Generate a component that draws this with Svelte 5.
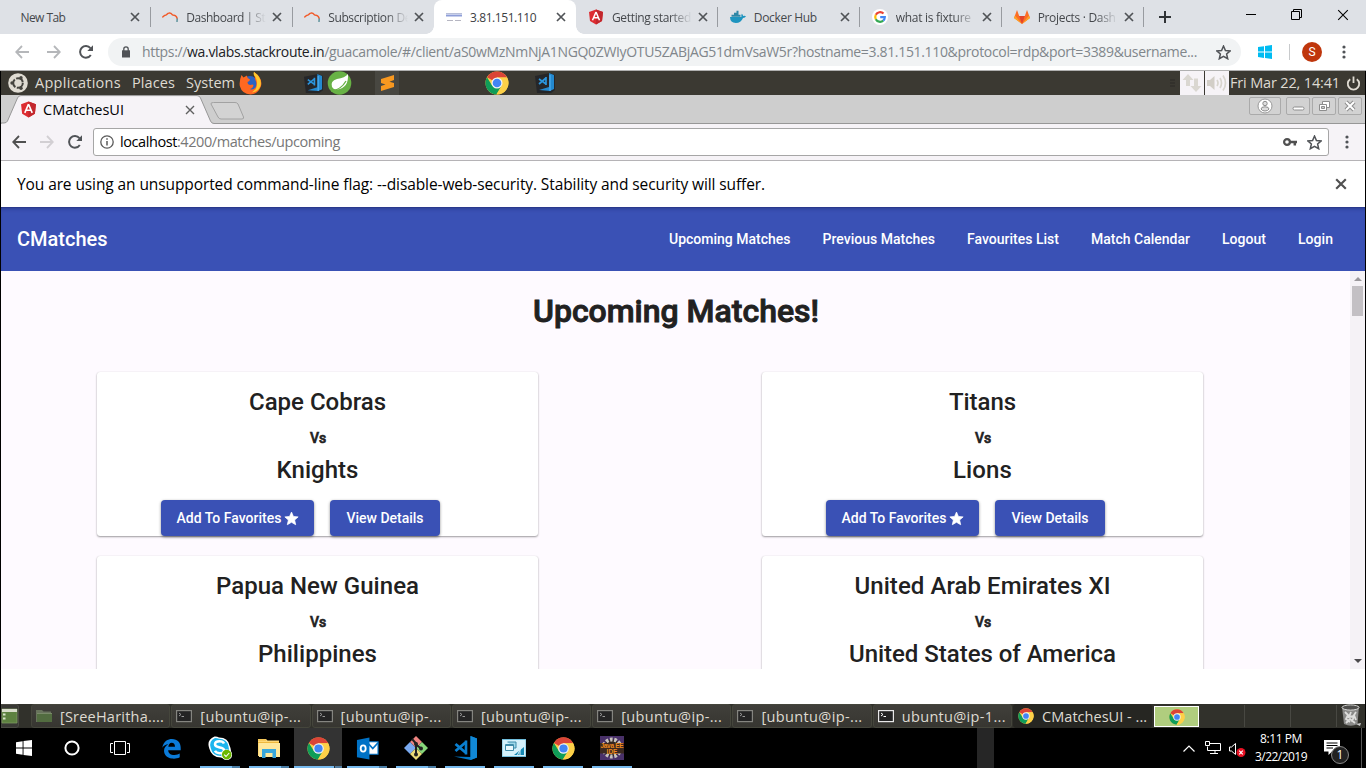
<script>
  const tabs = [
    { title: 'New Tab', w: 45 },
    { title: 'Dashboard | St', icon: 'stack', w: 79, fade: true },
    { title: 'Subscription De', icon: 'stack', w: 83, fade: true },
    { title: '3.81.151.110', icon: 'page', w: 66, active: true },
    { title: 'Getting started', icon: 'angular', w: 79, fade: true },
    { title: 'Docker Hub', icon: 'docker', w: 63 },
    { title: 'what is fixture', icon: 'google', w: 75, fade: true },
    { title: 'Projects · Dash', icon: 'gitlab', w: 78, fade: true }
  ];
  const links = [
    ['Upcoming Matches', 121.5],
    ['Previous Matches', 112.5],
    ['Favourites List', 92],
    ['Match Calendar', 99],
    ['Logout', 44],
    ['Login', 35]
  ];
  const matches = [
    { a: 'Cape Cobras', aw: 137, b: 'Knights', bw: 82, actions: true },
    { a: 'Titans', aw: 67, b: 'Lions', bw: 59, actions: true },
    { a: 'Papua New Guinea', aw: 203, b: 'Philippines', bw: 119 },
    { a: 'United Arab Emirates XI', aw: 256, b: 'United States of America', bw: 267 }
  ];
  const windows = [
    { title: '[SreeHaritha....', icon: 'folder', w: 104 },
    { title: '[ubuntu@ip-...', icon: 'term', w: 101 },
    { title: '[ubuntu@ip-...', icon: 'term', w: 101 },
    { title: '[ubuntu@ip-...', icon: 'term', w: 101 },
    { title: '[ubuntu@ip-...', icon: 'term', w: 101 },
    { title: '[ubuntu@ip-...', icon: 'term', w: 101 },
    { title: 'ubuntu@ip-1...', icon: 'termOpen', w: 104 },
    { title: 'CMatchesUI - ...', icon: 'chrome', w: 105, active: true }
  ];
  const apps = [
    { icon: 'edge', size: 21 },
    { icon: 'skype', run: 'stack' },
    { icon: 'explorer', run: 'stack' },
    { icon: 'chrome', run: 'focus', size: 23 },
    { icon: 'outlook', run: 'stack', size: 23 },
    { icon: 'git', run: 'stack' },
    { icon: 'vscode', run: 'one' },
    { icon: 'remote', run: 'one' },
    { icon: 'chrome', run: 'one', size: 23 },
    { icon: 'eclipse', run: 'one' }
  ];

  // Tracks a label so that it fills the given width in pixels.
  function fit(node, width) {
    const natural = node.getBoundingClientRect().width;
    const count = [...node.textContent].length;
    node.style.letterSpacing = `${(width - natural) / count}px`;
  }
</script>

{#snippet label(text, width)}<span class="label" use:fit={width}>{text}</span>{/snippet}

{#snippet cross(size, sw, color)}
  <svg width={size} height={size} viewBox="0 0 10 10"><path d="M1 1L9 9M9 1L1 9" stroke={color} stroke-width={sw} fill="none" /></svg>
{/snippet}

{#snippet icon(name, s)}
  {#if name === 'chrome'}
    <svg width={s} height={s} viewBox="0 0 24 24">
      <circle cx="12" cy="12" r="11.5" fill="#fdd048" />
      <path d="M12 12L2 6.2A11.5 11.5 0 0 1 22 6.2L21.9 6.5H12Z" fill="#db4437" />
      <path d="M2 6.2A11.5 11.5 0 0 0 11.3 23.5L16.8 14.6L12 12L7.2 14.7Z" fill="#0f9d58" />
      <path d="M22 6.5H12L16.8 14.7L11.5 23.5A11.5 11.5 0 0 0 22 6.5Z" fill="#fdd048" />
      <circle cx="12" cy="12" r="5.5" fill="#f4f4f4" /><circle cx="12" cy="12" r="4.3" fill="#4285f4" />
    </svg>
  {:else if name === 'angular'}
    <svg width={s} height={s} viewBox="0 0 16 16">
      <path d="M8 .5L15 3L14 12L8 15.5L2 12L1 3Z" fill="#dd2c31" /><path d="M8 .5L15 3L14 12L8 15.5Z" fill="#c2272d" />
      <path d="M8 3L4.5 11.2M8 3L11.5 11.2M5.8 8.7H10.2" stroke="#fff" stroke-width="1.5" fill="none" />
    </svg>
  {:else if name === 'stack'}
    <svg width={s} height={s} viewBox="0 0 16 16" fill="none">
      <path d="M.3 8.200C1.500 7.800 2 6 4 5.900C5.200 5.800 5.300 4.300 6.800 4C9 3.500 9.800 5 10.500 5.900C12 6.500 13 6 14 7.200C15 8.300 14.800 9 15.500 9.800" stroke="#f15a29" stroke-width="1.500" /><path d="M15.200 9.500L15 13" stroke="#4b8791" stroke-width="1.300" />
    </svg>
  {:else if name === 'page'}
    <svg width={s} height={s} viewBox="0 0 16 16"><path d="M0 4.5H16" stroke="#b8bfd8" stroke-width="1" /><path d="M0 6.5H16" stroke="#8e9ed8" stroke-width="2" /><path d="M1 11.5H7M9 11.5H15" stroke="#b6b6c2" stroke-width="1" /></svg>
  {:else if name === 'docker'}
    <svg width={s} height={s} viewBox="0 0 16 16"><path d="M0 8H11.4Q11 6 11.8 4.8Q13 5.6 13.1 7Q14.8 6.4 16 7.2Q15.2 9 13 9Q11 14 5.8 14Q.2 13.8 0 8Z" fill="#1e94bf" /><path d="M1.500 6.800H10.500M4 4.800H8.500M6.500 2.800H8.500" stroke="#2e86a6" stroke-width="2" /></svg>
  {:else if name === 'google'}
    <svg width={s} height={s} viewBox="0 0 16 16" fill="none" stroke-width="2.2">
      <circle cx="8" cy="8" r="8" fill="#fff" />
      <path d="M11.5 4.6A4.8 4.8 0 0 0 3.8 5.8" stroke="#ea4335" /><path d="M3.8 5.8A4.8 4.8 0 0 0 3.8 10.2" stroke="#fbbc05" />
      <path d="M3.8 10.2A4.8 4.8 0 0 0 11.2 11.6" stroke="#34a853" /><path d="M8.2 8.2H12.8A4.8 4.8 0 0 1 11.2 11.6" stroke="#4285f4" />
    </svg>
  {:else if name === 'gitlab'}
    <svg width={s} height={s} viewBox="0 0 16 16"><path d="M3 1L5.2 7H10.8L13 1L16 9L8 15L0 9Z" fill="#fc6d26" /><path d="M5.2 7H10.8L8 15Z" fill="#e24329" /><path d="M0 9L1 6.5L8 15ZM16 9L15 6.5L8 15Z" fill="#fca326" /></svg>
  {:else if name === 'vscode'}
    <svg width={s} height={s} viewBox="0 0 24 24"><path d="M17.500 0L24 2.500V21.500L17.500 24L1 20.500L17.500 21Z" fill="#0078c8" /><path d="M17.500 0L24 2.500V21.500L17.500 24Z" fill="#1188d6" /><path d="M12.500 6.500L2.500 15M12.500 16.500L2.500 8" stroke="#0a7fd0" stroke-width="2.800" /><path d="M13 4.500V18.500" stroke="#0a7fd0" stroke-width="2.600" /></svg>
  {:else if name === 'codeDark'}
    <svg width={s} height={s} viewBox="0 0 20 20"><path d="M0 3L15 0L20 2V17L16 20L2 20Z" fill="#252629" /><path d="M14 0L19 2V16L15 18L4 17L14 14Z" fill="#2489cf" /><path d="M15 2V18" stroke="#45a6e8" stroke-width="1.5" /><path d="M11 5L4 11M11 11L4 6M11 4V12" stroke="#2b95dd" stroke-width="1.7" /></svg>
  {:else if name === 'folder'}
    <svg width={s} height={s} viewBox="0 0 16 16"><path d="M0 2H6L7.5 3.5H15V14H0Z" fill="#68735c" /><path d="M1 5H16V14H1Z" fill="#526c40" /><path d="M1 5.5H16" stroke="#798a69" /></svg>
  {:else if name === 'term' || name === 'termOpen'}
    <svg width={s} height={s} viewBox="0 0 16 16"><rect x=".6" y="2.6" width="14.8" height="11" fill="#242424" stroke={name === 'term' ? '#858580' : '#e8e8e8'} stroke-width="1.2" /><path d="M3 5L5 6.5L3 8M5.5 8.5H8" stroke={name === 'term' ? '#999' : '#fff'} fill="none" /></svg>
  {:else if name === 'edge'}
    <svg width={s} height={s} viewBox="0 0 24 24"><path d="M1.5 11C3 3 8 1 12.5 1C19 1 22.5 5.5 22.5 11V14H8.2C8.5 18 12 19.7 15.5 19.5C18 19.3 20 18.6 21.4 17.7V22C18.5 23.5 15.5 23.9 12.5 23.5C6.5 22.8 3.2 18.6 3.5 14C3.7 11 5.8 8.6 8.5 7.2C5.5 7.4 3 8.7 1.5 11ZM8.4 10H16C16 6.8 14.5 5.4 12.2 5.4C10 5.5 8.6 7.6 8.4 10Z" fill="#0b7bd9" /></svg>
  {:else if name === 'skype'}
    <svg width={s} height={s} viewBox="0 0 24 24"><path d="M6.5.5Q9 .3 11 1.4Q20.5 1.5 21.7 10Q24.5 15.5 21 19.6Q17 23.5 13 21.5Q3.5 21.4 1.3 12.5Q-1.8 4 6.5.5Z" fill="#fff" /><path d="M7 2Q9.5 2 11 2.8Q19 3 20.4 10Q22 14 20 18Q17 21 13 20Q4.5 20 2.7 12Q.5 5 7 2Z" fill="#1db5ee" /><path d="M16 7.5Q15 5.3 11.5 5.3Q7 5.3 7 8.3Q7 10.5 11 11.3Q16.3 12.3 16 14.6Q15.7 17.3 11.6 17.2Q8 17 7 14.8" fill="none" stroke="#fff" stroke-width="2.5" /><circle cx="18.7" cy="18.6" r="5.4" fill="#fff" /><circle cx="18.7" cy="18.6" r="4.8" fill="#6bb700" /><path d="M16.2 18.7L18 20.5L21.2 17" stroke="#fff" fill="none" stroke-width="1.1" /></svg>
  {:else if name === 'explorer'}
    <svg width={s} height={s} viewBox="0 0 24 24"><path d="M1 3H9L10.5 4.5H22V20H1Z" fill="#ffd977" /><path d="M2 7H23V21H2Z" fill="#ffe89c" /><path d="M5 22V13H19V22H15.5V17H8.5V22Z" fill="#38a7dc" /><path d="M1 4H9M1 6.5H22" stroke="#eeb83e" stroke-width="1" /></svg>
  {:else if name === 'outlook'}
    <svg width={s} height={s} viewBox="0 0 24 24"><path d="M12 5H23V18H12Z" fill="#fff" stroke="#0072c6" stroke-width="1.2" /><path d="M13 7L17.500 12L23 6" stroke="#0072c6" stroke-width="1.800" fill="none" /><path d="M1 3L14 .5V23.5L1 21Z" fill="#0072c6" /><ellipse cx="7.5" cy="12" rx="2.6" ry="3.3" stroke="#fff" stroke-width="1.9" fill="none" /></svg>
  {:else if name === 'git'}
    <svg width={s} height={s} viewBox="0 0 24 24"><path d="M12 0L18 6L12 12L6 6Z" fill="#ef8480" /><path d="M18 6L24 12L18 18L12 12Z" fill="#87d67a" /><path d="M6 6L12 12L6 18L0 12Z" fill="#79a9f0" /><path d="M12 12L18 18L12 24L6 18Z" fill="#eadb77" /><path d="M8 3L12 7.5V20M12 8.5L17 12.5" stroke="#222" stroke-width="2" fill="none" /><circle cx="12" cy="8" r="2" fill="#222" /><circle cx="17" cy="12.5" r="2" fill="#222" /><circle cx="12" cy="18.5" r="2" fill="#222" /></svg>
  {:else if name === 'remote'}
    <svg width={s} height={s} viewBox="0 0 24 24"><path d="M0 3.500H24V20.500H0Z" fill="#d4f1fb" stroke="#70bddc" /><path d="M5.500 6H14V12H12" fill="#9ed9ea" stroke="#3f8caa" /><path d="M3.500 8.500H11.500V14.500H3.500Z" fill="#eaf9fd" stroke="#3f8caa" /><path d="M3.500 9.500H11.500" stroke="#3f8caa" /><path d="M12 19L22 11V19Z" fill="#1689b5" /><path d="M15 20L19 12M18 20V12" stroke="#d4f1fb" /></svg>
  {:else if name === 'eclipse'}
    <svg width={s} height={s} viewBox="0 0 24 24"><rect width="24" height="24" fill="#493169" /><circle cx="12" cy="12" r="8.500" fill="#302520" stroke="#c8c3bd" stroke-width="4" stroke-dasharray="2.600 1.600" /><rect x="0" y="7" width="24" height="10.500" fill="#3b2820" /><text x="12" y="12" text-anchor="middle" textLength="23" font-size="6.5" font-weight="bold" fill="#ed8b1e" font-family="Liberation Sans, sans-serif">Java EE</text><text x="12" y="17.500" text-anchor="middle" font-size="6.500" font-weight="bold" fill="#ed8b1e" font-family="Liberation Sans, sans-serif">IDE</text></svg>
  {/if}
{/snippet}

{#snippet back(color)}<svg width="14" height="14" viewBox="0 0 14 14" fill="none" stroke={color} stroke-width="1.8"><path d="M14 7H1.5M7 1L1.2 7L7 13" /></svg>{/snippet}
{#snippet forward(color)}<svg width="14" height="14" viewBox="0 0 14 14" fill="none" stroke={color} stroke-width="1.8"><path d="M0 7H12.5M7 1L12.8 7L7 13" /></svg>{/snippet}
{#snippet reload()}<svg width="14" height="14" viewBox="0 0 14 14"><path d="M11.8 10A5.8 5.8 0 1 1 11.4 3.2" fill="none" stroke="#505357" stroke-width="2" /><path d="M14 .3V6H8.3Z" fill="#505357" /></svg>{/snippet}
{#snippet star(size, fill)}<svg width={size} height={size} viewBox="0 0 14 14"><path d="M7 1L8.8 5.1L13.2 5.5L9.9 8.4L10.9 12.8L7 10.5L3.1 12.8L4.1 8.4L.8 5.5L5.2 5.1Z" {fill} stroke={fill === 'none' ? '#505357' : fill} stroke-width={fill === 'none' ? 1.4 : 0.7} /></svg>{/snippet}
{#snippet dots()}<svg width="4" height="14" viewBox="0 0 4 14" fill="#505357"><circle cx="2" cy="2" r="1.6" /><circle cx="2" cy="7" r="1.6" /><circle cx="2" cy="12" r="1.6" /></svg>{/snippet}

<div class="screen">
  <header class="tabstrip">
    <div class="tabs">
      {#each tabs as tab, i}
        <div class="tab" class:active={tab.active} class:line={i !== 2 && i !== 3}>
          {#if tab.icon}<span class="favicon">{@render icon(tab.icon, 16)}</span>{/if}
          <span class="title" class:fade={tab.fade}>{@render label(tab.title, tab.w)}</span>
          <span class="close">{@render cross(10, 1.7, '#505357')}</span>
        </div>
      {/each}
    </div>
    <svg class="plus" width="12" height="12" viewBox="0 0 12 12"><path d="M6 0V12M0 6H12" stroke="#303336" stroke-width="2" /></svg>
    <div class="controls">
      <svg width="10" height="11" viewBox="0 0 10 11"><path d="M0 5.5H10" stroke="#000" /></svg>
      <svg width="11" height="11" viewBox="0 0 11 11" fill="none" stroke="#000"><path d="M.5 2.5H8.5V10.5H.5ZM2.5 2.5V.5H10.5V8.5H8.5" /></svg>
      {@render cross(12, 0.9, '#000')}
    </div>
  </header>

  <div class="toolbar">
    {@render back('#b5b7ba')}{@render forward('#b5b7ba')}{@render reload()}
    <div class="omnibox">
      <svg width="8" height="12" viewBox="0 0 8 12"><path d="M0 4.3H8V11.5H0Z" fill="#505357" /><path d="M1.8 5V3A2.2 2.2 0 0 1 6.2 3V5" stroke="#505357" stroke-width="1.3" fill="none" /></svg>
      <span class="url"><span class="label" use:fit={1055}>https://<b>wa.vlabs.stackroute.in</b>/guacamole/#/client/aS0wMzNmNjA1NGQ0ZWIyOTU5ZABjAG51dmVsaW5r?hostname=3.81.151.110&amp;protocol=rdp&amp;port=3389&amp;username...</span></span>
      {@render star(15, 'none')}
    </div>
    <svg class="win" width="14" height="14" viewBox="0 0 14 14" fill="#00bcf2"><path d="M0 2L6 1.2V6.6H0ZM7 1L14 0V6.6H7ZM0 7.5H6V12.9L0 12ZM7 7.5H14V14L7 13Z" /></svg>
    <i class="divider"></i>
    <span class="avatar">S</span>
    {@render dots()}
  </div>

  <div class="desktop">
    <div class="panel">
      <svg class="ubuntu" width="20" height="20" viewBox="0 0 20 20"><circle cx="10" cy="10" r="9.8" fill="#dfdbd2" /><circle cx="10" cy="10" r="4.8" fill="none" stroke="#45443f" stroke-width="2" stroke-dasharray="8.6 1.45" /><circle cx="4" cy="10" r="1.7" fill="#45443f" /><circle cx="13" cy="4.8" r="1.7" fill="#45443f" /><circle cx="13" cy="15.2" r="1.7" fill="#45443f" /></svg>
      <span class="menu">{@render label('Applications', 86)}</span>
      <span class="menu">{@render label('Places', 43)}</span>
      <span class="menu">{@render label('System', 49)}</span>
      <svg class="firefox" width="23" height="23" viewBox="0 0 23 23"><circle cx="11" cy="11.500" r="7.500" fill="#2a62c4" /><path d="M15 0Q24 6 22 14Q19 22.500 11.500 22.500Q3 22 .8 14Q0 9 2.500 3L4.500 5.500L8 3.500Q7.500 6 11 7.500Q11 9 8.500 10Q8.500 13 11.500 13Q13.500 12 14.500 13Q14 16.500 11 17Q14 18.500 16.500 15.500Q18.500 12 16 7Z" fill="#ff6821" /><path d="M15 0Q23.500 6 21.500 14Q19 20 13 20.500Q18.500 17 18 10Q17 5 15.500 4Q14 2 15 0Z" fill="#ffc82c" /></svg>
      <span class="code1">{@render icon('codeDark', 19)}</span>
      <svg class="spring" width="25" height="24" viewBox="0 0 25 24"><circle cx="12.5" cy="12" r="11.8" fill="#68b245" /><path d="M21 3Q18 7 10 8Q3 10 5 16Q7 19 10 18.5Q22 17 21 3Z" fill="#fff" /><path d="M4 20Q14 19 19 10" stroke="#68b245" stroke-width="1.3" fill="none" /></svg>
      <span class="sublime"><svg width="13" height="16" viewBox="0 0 13 16"><path d="M0 4L13 0V5L8.500 6.800L13 8V12L0 16V11L4.500 9.500L0 8Z" fill="#f89820" /></svg></span>
      <span class="pchrome">{@render icon('chrome', 24)}</span>
      <span class="code2">{@render icon('codeDark', 20)}</span>
      <span class="tray">
        <svg class="grip" width="5" height="8" viewBox="0 0 5 8"><path d="M0 1H5M0 4H5M0 7H5" stroke="#2c2b27" /></svg>
        <span class="cell"><svg width="20" height="20" viewBox="0 0 20 20" fill="#dad7d1"><path d="M6 1L11.5 7H8V13H4V7H.5Z" /><path d="M14 19L8.5 13H12V5.5H16V13H19.5Z" /></svg></span>
        <span class="cell"><svg width="20" height="18" viewBox="0 0 20 18"><path d="M0 6H3L7.5 2V16L3 12H0Z" fill="#d2cec7" /><path d="M10 6Q12 9 10 12M13 4Q16 9 13 14M16 1.5Q21 9 16 16.5" stroke="#d8d5ce" stroke-width="1.7" fill="none" /></svg></span>
        <span class="clock">{@render label('Fri Mar 22, 14:41', 110)}</span>
        <svg width="15" height="15" viewBox="0 0 15 15" fill="none" stroke="#dfdbd2" stroke-width="1.8"><path d="M4.2 3.2A5.7 5.7 0 1 0 10.8 3.2M7.5 .5V7" /></svg>
      </span>
    </div>

    <div class="strip2">
      <svg class="shape" width="250" height="29" viewBox="0 0 250 29"><path d="M0 29V28H3Q5.500 28 6.500 26L16.500 3Q17.500 .6 20 .6H196Q198.500 .6 199.500 3L209.500 26Q210.500 28.500 213 28.500H250V30H0Z" fill="#f6f3f7" stroke="#979797" stroke-width="1" /><path d="M212.500 7.500H234Q236 7.500 237 9L242.500 22Q243 24 241 24H220Q218 24 217 22L210 9Q209.500 7.500 212.500 7.500Z" fill="#d3d3d3" stroke="#a2a2a2" /></svg>
      <span class="ang">{@render icon('angular', 17)}</span>
      <span class="t2">{@render label('CMatchesUI', 81)}</span>
      <span class="x2">{@render cross(10, 1.4, '#606060')}</span>
      <span class="wm">
        <i class="user"><svg width="16" height="16" viewBox="0 0 16 16"><circle cx="8" cy="8" r="7" fill="#fff" stroke="#999" /><circle cx="8" cy="5.500" r="2.200" fill="#ddd" stroke="#8d8d8d" /><path d="M4 11Q4 8.800 8 8.800T12 11Q11 13 8 13T4 11Z" fill="#ddd" stroke="#8d8d8d" /></svg></i>
        <i><svg width="13" height="12" viewBox="0 0 13 12"><rect x="1" y="7" width="11" height="3" rx="1.500" fill="#fff" stroke="#8d8d8d" /></svg></i>
        <i><svg width="13" height="12" viewBox="0 0 13 12" fill="#fff" stroke="#8d8d8d"><path d="M4.500 1.500H11.500V7.500H4.500Z" /><path d="M1.500 4.500H8.500V10.500H1.500Z" /><path d="M3.500 6.500H6.500V8.500H3.500Z" fill="#ccc" /></svg></i>
        <i><svg width="12" height="12" viewBox="0 0 12 12"><path d="M2 2L10 10M10 2L2 10" stroke="#8d8d8d" stroke-width="4" /><path d="M2 2L10 10M10 2L2 10" stroke="#fff" stroke-width="2" /></svg></i>
      </span>
    </div>

    <div class="bar2">
      {@render back('#505050')}{@render forward('#d2cfd3')}{@render reload()}
      <div class="addr">
        <svg width="14" height="14" viewBox="0 0 14 14"><circle cx="7" cy="7" r="6.200" fill="none" stroke="#5a5a5a" stroke-width="1.300" /><path d="M7 6V10.500M7 3.300V4.800" stroke="#5a5a5a" stroke-width="1.500" /></svg>
        <span class="address"><span class="label" use:fit={220}><b>localhost</b>:4200/matches/upcoming</span></span>
        <svg class="key" width="14" height="10" viewBox="0 0 14 10"><circle cx="4" cy="5" r="2.900" fill="none" stroke="#505050" stroke-width="2.200" /><path d="M7 5H14M11.800 5V8.500" stroke="#505050" stroke-width="2.500" /></svg>
        {@render star(15, 'none')}
      </div>
      {@render dots()}
    </div>

    <div class="infobar">
      <span>{@render label('You are using an unsupported command-line flag: --disable-web-security. Stability and security will suffer.', 748)}</span>
      {@render cross(12, 1.8, '#505050')}
    </div>

    <nav>
      <span class="brand">{@render label('CMatches', 90.5)}</span>
      {#each links as [text, w]}<a href="#/">{@render label(text, w)}</a>{/each}
    </nav>

    <div class="viewport">
      <main>
        <h1>{@render label('Upcoming Matches!', 286)}</h1>
        <div class="cards">
          {#each matches as m}
            <section>
              <h2>{@render label(m.a, m.aw)}</h2>
              <h3>{@render label('Vs', 16)}</h3>
              <h2>{@render label(m.b, m.bw)}</h2>
              {#if m.actions}
                <div class="actions">
                  <button class="fav">{@render label('Add To Favorites', 105)}{@render star(15, '#fff')}</button>
                  <button class="view">{@render label('View Details', 77)}</button>
                </div>
              {/if}
            </section>
          {/each}
        </div>
      </main>
      <div class="scroll">
        <svg width="8" height="4" viewBox="0 0 8 4"><path d="M0 4L4 0L8 4Z" fill="#9a979b" /></svg>
        <i></i>
        <svg class="down" width="8" height="4" viewBox="0 0 8 4"><path d="M0 0L4 4L8 0Z" fill="#4c4a4d" /></svg>
      </div>
    </div>

    <div class="winlist">
      <svg class="showdesk" width="18" height="24" viewBox="0 0 18 24"><path d="M0 .5H15Q17.500 .5 17.500 3V21Q17.500 23.500 15 23.500H0Z" fill="#383834" stroke="#4a4a43" /><path d="M1 5H16V19H1Z" fill="#5d8140" stroke="#7b9760" stroke-width=".8" /><path d="M1 5H16V8H1Z" fill="#d8dccb" /><path d="M2 10.500H4.500M2 14.500H4.500" stroke="#d9e5ca" stroke-width="2" /></svg>
      <div class="buttons">
        {#each windows as w}
          <div class="wbtn" class:on={w.active}>{@render icon(w.icon, 16)}<span>{@render label(w.title, w.w)}</span></div>
        {/each}
      </div>
      <div class="switcher"><i class="cur">{@render icon('chrome', 16)}</i><i></i><i></i><i></i></div>
      <svg class="trash" width="20" height="23" viewBox="0 0 20 23"><path d="M1 3L18 2L16.500 20Q10 23.500 3 20Z" fill="#8a8a88" /><ellipse cx="9.500" cy="3.500" rx="8.500" ry="2.600" fill="#4f4f4d" stroke="#d5d5d3" /><path d="M4 8L7 11L5 15L9 18M10 8L8 13L13 12L11 18M15 8L13 11L15 16M5 19L9 15L14 19" stroke="#dededc" stroke-width="1.800" fill="none" /><path d="M15 20L20 19L19 22Z" fill="#ccc" /></svg>
    </div>
  </div>

  <footer>
    <div class="slot"><svg width="16" height="16" viewBox="0 0 16 16" fill="#fff"><path d="M0 2.200L6.600 1.300V7.500H0ZM7.500 1.100L16 0V7.500H7.500ZM0 8.400H6.600V14.700L0 13.800ZM7.500 8.400H16V16L7.500 14.900Z" /></svg></div>
    <div class="slot"><svg width="16" height="16" viewBox="0 0 16 16"><circle cx="8" cy="8" r="6.600" fill="none" stroke="#fff" stroke-width="2" /></svg></div>
    <div class="slot"><svg width="20" height="14" viewBox="0 0 20 14" fill="none" stroke="#fff"><path d="M4.500 .5H15.500V13.500H4.500ZM3 2.500H.5V11.500H3M17 2.500H19.500V11.500H17" /></svg></div>
    <div class="apps">
      {#each apps as app}
        <div class="app {app.run ?? ''}">{@render icon(app.icon, app.size ?? 24)}</div>
      {/each}
    </div>
    <i class="handle"></i>
    <div class="systray">
      <svg width="12" height="7" viewBox="0 0 12 7"><path d="M.5 6.500L6 1L11.500 6.500" fill="none" stroke="#fff" stroke-width="1.200" /></svg>
      <svg width="17" height="14" viewBox="0 0 17 14" fill="none" stroke="#fff"><path d="M4.500 2.500H15.500V9.500H2.500V5.500M10 9.500V12.500M5 12.500H13M.5 .5H4.500V4.500H.5Z" /></svg>
      <svg class="vol" width="17" height="15" viewBox="0 0 17 15"><path d="M.5 5V9H2.500L6.500 12.500V1.500L2.500 5Z" fill="none" stroke="#fff" /><circle cx="12" cy="10.500" r="4.500" fill="#e81123" /><path d="M10.200 8.700L13.800 12.300M13.800 8.700L10.200 12.300" stroke="#fff" stroke-width="1.200" /></svg>
      <div class="time"><span>{@render label('8:11 PM', 42)}</span><span>{@render label('3/22/2019', 52)}</span></div>
      <div class="note"><svg width="16" height="15" viewBox="0 0 16 15"><path d="M0 0H16V11.500H8L4.500 15V11.500H0Z" fill="#fff" /><path d="M2.500 3H13.500M2.500 5.500H13.500M2.500 8H9" stroke="#000" /></svg><b>1</b></div>
    </div>
    <i class="edge"></i>
  </footer>
</div>

<style>
  :global(body) { margin: 0; overflow: hidden; }
  .screen { width: 1366px; height: 768px; overflow: hidden; display: flex; flex-direction: column; background: #fff; font-family: "Open Sans", "Noto Sans", sans-serif; }
  svg { display: block; flex: none; }
  i { font-style: normal; }
  .label { display: inline-block; white-space: pre; }

  .tabstrip { height: 34px; flex: none; background: #dee1e6; display: flex; align-items: center; padding-left: 8px; }
  .tabs { display: grid; grid-template-columns: repeat(8, 141.9px); height: 34px; }
  .tab { display: flex; align-items: center; padding: 0 9.5px 0 12.4px; position: relative; font-size: 12px; color: #45484c; min-width: 0; }
  .tab.line::after { content: ""; position: absolute; right: -1px; top: 7px; width: 1px; height: 20px; background: #989ba0; }
  .tab.active { background: #fff; border-radius: 8px 8px 0 0; color: #3c4043; }
  .tab.active::before { content: ""; position: absolute; left: -8px; right: -8px; bottom: 0; height: 8px; background: radial-gradient(circle at 0 0, transparent 7.5px, #fff 8px) 0 0 / 8px 8px no-repeat, radial-gradient(circle at 100% 0, transparent 7.5px, #fff 8px) 100% 0 / 8px 8px no-repeat; }
  .favicon { margin-right: 8px; }
  .title { flex: 1; min-width: 0; overflow: hidden; }
  .title.fade { -webkit-mask-image: linear-gradient(90deg, #000 72%, transparent 100%); mask-image: linear-gradient(90deg, #000 72%, transparent 100%); }
  .close { margin-left: 6px; }
  .plus { margin-left: 16px; }
  .controls { margin-left: auto; padding: 0 17px 5px 0; display: flex; gap: 35px; align-items: center; }

  .toolbar { height: 36px; flex: none; display: flex; align-items: center; padding-left: 15px; border-bottom: 1px solid #b0b0b0; }
  .toolbar > svg:nth-child(2) { margin-left: 18px; }
  .toolbar > svg:nth-child(3) { margin: 0 15px 0 18px; }
  .omnibox { width: 1133px; height: 28px; box-sizing: border-box; border-radius: 14px; background: #f1f3f4; display: flex; align-items: center; padding: 0 10px 0 14px; }
  .url { font-size: 14px; color: #80868b; margin: -1px auto 0 12px; line-height: 20px; }
  .url b { font-weight: 400; color: #202124; }
  .win { margin-left: 17px; }
  .divider { width: 1px; height: 16px; background: #c8cacc; margin: 0 12px 0 17px; }
  .avatar { width: 20px; height: 20px; border-radius: 50%; background: #bf360c; color: #fff; font: 12px/20px Roboto, sans-serif; text-align: center; margin-right: 20px; }

  .desktop { width: 1364px; height: 657px; flex: none; border: solid #000; border-width: 0 1px; display: flex; flex-direction: column; }
  .panel { height: 24px; flex: none; background: #3b3932; color: #dfdbd2; display: flex; align-items: center; font-size: 14.5px; line-height: 23px; }
  .ubuntu { margin-left: 7px; }
  .menu { margin-left: 7px; height: 24px; }
  .menu + .menu { margin-left: 11px; }
  .firefox { margin-left: 4px; }
  .code1 { margin-left: 42px; }
  .spring { margin-left: 4px; }
  .sublime { margin-left: 23px; width: 24px; height: 24px; display: grid; place-items: center; background: #484741; }
  .pchrome { margin-left: 86px; }
  .code2 { margin-left: 26px; }
  .tray { margin-left: auto; display: flex; align-items: center; height: 24px; padding-right: 4px; }
  .grip { margin-right: 5px; }
  .cell { width: 24px; height: 24px; background: #f6f3f7; display: grid; place-items: center; margin-right: 1px; }
  .clock { margin: 0 6px 0 0; height: 24px; }

  .strip2 { height: 29px; flex: none; background: linear-gradient(#cecece 28px, #979797 28px); display: flex; align-items: center; position: relative; font-size: 14.5px; color: #000; }
  .shape { position: absolute; left: 0; top: 0; }
  .ang { margin-left: 19px; position: relative; }
  .t2 { margin-left: 6px; position: relative; }
  .x2 { margin-left: 61px; position: relative; }
  .wm { margin: 0 3px 7px auto; display: flex; gap: 2px; }
  .wm i { width: 22px; height: 16px; border: 1px solid #aaa; border-radius: 2px; display: grid; place-items: center; background: #d2d2d2; }
  .wm .user { width: 30px; margin-right: 3px; }

  .bar2 { height: 36px; flex: none; background: #f6f3f7; border-bottom: 1px solid #b5b3b6; display: flex; align-items: center; padding-left: 11px; }
  .bar2 > svg:nth-child(2) { margin-left: 14px; }
  .bar2 > svg:nth-child(3) { margin: 0 11px 0 14px; }
  .addr { width: 1236px; height: 28px; box-sizing: border-box; border: 1px solid #a6a6a6; border-radius: 3px; background: #fff; display: flex; align-items: center; padding: 0 6px 0 6px; margin-right: 16px; }
  .address { font-size: 14.5px; color: #777; margin: -1px auto 0 6px; }
  .address b { font-weight: 400; color: #000; }
  .key { margin-right: 10px; }

  .infobar { height: 46px; flex: none; background: #fff; display: flex; justify-content: space-between; align-items: center; padding: 0 18px 0 16px; font-size: 15.5px; color: #000; }
  nav { height: 64px; flex: none; background: #3a51b5; box-shadow: inset 0 1px 0 #2a398d, inset 0 4px 4px -3px #26367f; color: #fff; display: flex; align-items: center; gap: 32px; padding: 0 32px 0 16px; font: 500 14px Roboto, sans-serif; }
  .brand { font-size: 20px; margin-right: auto; }
  nav a { color: inherit; text-decoration: none; }

  .viewport { height: 398px; flex: none; display: flex; background: #fefaff; margin-bottom: 35px; overflow: hidden; font-family: Roboto, sans-serif; color: #212121; }
  main { width: 1349px; flex: none; }
  h1 { margin: 0; padding: 20px 0 0 1px; font: 500 32px/40px Roboto, sans-serif; -webkit-text-stroke: .9px #212121; text-align: center; height: 81px; }
  .cards { display: grid; grid-template-columns: 441px 441px; column-gap: 224px; row-gap: 20px; padding-left: 96px; }
  section { height: 164px; box-sizing: border-box; background: #fff; border-radius: 3px; box-shadow: 0 1px 2px rgba(0, 0, 0, .38), 0 0 1px rgba(0, 0, 0, .12); padding-top: 14px; text-align: center; }
  h2 { margin: 0; font: 500 24px/32px Roboto, sans-serif; }
  h3 { margin: 10px 0 6px; padding-left: 1px; font: 500 14px/20px Roboto, sans-serif; -webkit-text-stroke: .6px #212121; }
  .actions { display: flex; gap: 16px; padding: 14px 0 0 64px; }
  button { border: 0; height: 36px; border-radius: 4px; background: #3a51b5; color: #fff; font: 500 14px/36px Roboto, sans-serif; padding: 0; display: flex; align-items: center; justify-content: center; gap: 2px; box-shadow: 0 1px 3px rgba(0, 0, 0, .45); }
  .fav { width: 153px; }
  .view { width: 110px; }
  .scroll { width: 15px; background: #f5f2f6; display: flex; flex-direction: column; align-items: center; padding: 6px 0; box-sizing: border-box; }
  .scroll i { width: 11px; height: 30px; background: #c3c0c4; margin-top: 5px; }
  .down { margin-top: auto; }

  .winlist { height: 24px; flex: none; background: #31312b; display: flex; color: #dfdbd2; font-size: 14.5px; }
  .buttons { display: grid; grid-template-columns: repeat(8, 140.3px); margin-left: 12px; }
  .wbtn { box-sizing: border-box; height: 24px; margin-right: 1px; border: 1px solid #45463c; border-radius: 3px; background: linear-gradient(#403f3a, #373631); display: flex; align-items: center; padding-left: 4px; gap: 8px; line-height: 21px; overflow: hidden; }
  .wbtn.on { background: #262622; border-color: #262622; }
  .switcher { display: flex; padding-top: 1px; margin-left: 1px; }
  .switcher i { width: 45px; height: 22px; border-right: 1px solid #484842; display: grid; place-items: center; }
  .switcher .cur { background: #b0cd7e; border: 1px solid #fff; width: 43px; height: 19px; margin-top: 1px; }
  .trash { margin-left: 4px; }

  footer { height: 40px; flex: none; background: #000; display: flex; color: #fff; }
  .slot { width: 48px; display: grid; place-items: center; }
  .apps { display: grid; grid-template-columns: repeat(10, 49px); margin-left: 3px; }
  .app { display: flex; align-items: center; justify-content: center; padding-right: 1px; position: relative; }
  .app.stack::after, .app.one::after, .app.focus::after { content: ""; position: absolute; left: 4px; bottom: 0; width: 40px; height: 2px; background: #76b9ed; }
  .app.stack::after { background: linear-gradient(90deg, #76b9ed 32px, #4a7da5 32px); }
  .app.focus { background: #333; margin-right: 1px; padding-right: 0; }
  .app.focus::after { left: 0; width: 48px; background: linear-gradient(90deg, #76b9ed 40px, #28323a 40px, #28323a 41px, #527da0 41px); }
  .handle { width: 17px; background: #262626; margin-left: 340px; }
  .systray { margin-left: auto; display: flex; align-items: center; }
  .systray > svg { margin-right: 10px; }
  .systray > svg.vol { margin: 2px 8px 0 -3px; }
  .time { width: 56px; display: flex; flex-direction: column; align-items: center; font-size: 12px; line-height: 18px; margin: -1px 15px 0 -1px; }
  .note { position: relative; width: 24px; height: 40px; padding-top: 24px; box-sizing: border-box; margin-right: 13px; }
  .note svg { margin-top: -12px; }
  .note b { position: absolute; left: 7px; top: 18px; width: 16px; height: 16px; border: 1px solid #888; border-radius: 50%; background: #222; font: 12px/16px "Open Sans", sans-serif; text-align: center; }
  .edge { width: 1px; background: #555; margin-right: 4px; }
</style>
